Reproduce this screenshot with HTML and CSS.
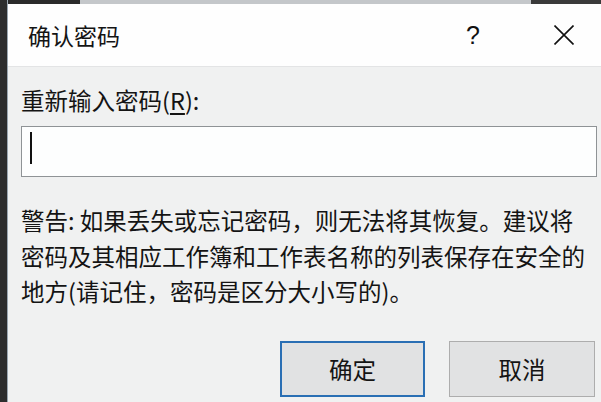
FILE: index.html
```html
<!DOCTYPE html>
<html lang="zh-CN">
<head>
<meta charset="utf-8">
<title>确认密码</title>
<link rel="stylesheet" href="styles.css">
</head>
<body>
<div class="screen">
  <div class="side"></div>
  <div class="dialog">
    <div class="topstrip"><span class="seg seg-a"></span><span class="seg seg-b"></span></div>
    <div class="titlebar">
      <span class="title">确认密码</span>
      <span class="help">?</span>
      <span class="close">
        <svg width="20" height="20" viewBox="0 0 20 20"><path d="M0.5 0.5 L19.5 19.5 M19.5 0.5 L0.5 19.5" stroke="#111" stroke-width="1.6" fill="none"/></svg>
      </span>
    </div>
    <div class="content">
      <div class="label">重新输入密码(<span class="ul">R</span>):</div>
      <div class="input"><span class="caret"></span></div>
      <p class="warn">警告: 如果丢失或忘记密码，则无法将其恢复。建议将<br>密码及其相应工作簿和工作表名称的列表保存在安全的<br>地方(请记住，密码是区分大小写的)。</p>
      <div class="buttons">
        <div class="btn primary">确定</div>
        <div class="btn">取消</div>
      </div>
    </div>
  </div>
</div>
</body>
</html>
```

FILE: styles.css
```css
html, body {
  margin: 0;
  padding: 0;
  width: 601px;
  height: 402px;
  overflow: hidden;
  background: #2d2d2d;
}
.screen {
  display: flex;
  width: 601px;
  height: 402px;
  font-family: "Noto Sans CJK SC", "Noto Sans", sans-serif;
  color: #141414;
}
.side {
  width: 7px;
  background: #2d2d2d;
  flex: none;
}
.dialog {
  flex: 1;
  display: flex;
  flex-direction: column;
  border-left: 1px solid #9aa6b0;
  background: #f0f1f1;
}
.topstrip {
  height: 4px;
  background: #c4c7ca;
  display: flex;
  justify-content: space-between;
}
.seg { display: block; height: 4px; }
.seg-a { width: 72px; background: #2a2a2a; }
.seg-b { width: 70px; background: #3a3a3a; }
.titlebar {
  height: 62px;
  background: #fefefe;
  border-bottom: 1px solid #e3e4e5;
  display: flex;
  align-items: center;
  padding: 0 27px 0 20px;
}
.title {
  flex: 1;
  font-size: 23px;
  line-height: 30px;
}
.help {
  width: 12px;
  margin-right: 76px;
  font-family: "Liberation Sans", sans-serif;
  font-size: 25px;
  line-height: 30px;
  color: #111;
}
.close {
  width: 20px;
  height: 20px;
  display: flex;
}
.content {
  padding: 18px 4px 0 13px;
  display: flex;
  flex-direction: column;
}
.label {
  font-size: 23.5px;
  line-height: 30px;
  height: 30px;
}
.ul { text-decoration: underline; text-underline-offset: 3px; }
.input {
  margin-top: 11px;
  height: 49px;
  background: #fdfefe;
  border: 1px solid #8f9396;
}
.caret {
  display: block;
  width: 2px;
  height: 32px;
  margin: 5px 0 0 8px;
  background: #111;
}
.warn {
  margin: 26px 0 0 0;
  font-size: 23.5px;
  line-height: 35.5px;
  white-space: nowrap;
}
.buttons {
  margin-top: 31px;
  display: flex;
  justify-content: flex-end;
  gap: 24px;
  padding-right: 2px;
}
.btn {
  width: 144px;
  height: 54px;
  border: 1px solid #adadad;
  background: #e1e2e3;
  display: flex;
  align-items: center;
  justify-content: center;
  font-size: 23.5px;
}
.btn.primary {
  width: 141px;
  height: 52px;
  border: 2px solid #2a6fb4;
}
```
